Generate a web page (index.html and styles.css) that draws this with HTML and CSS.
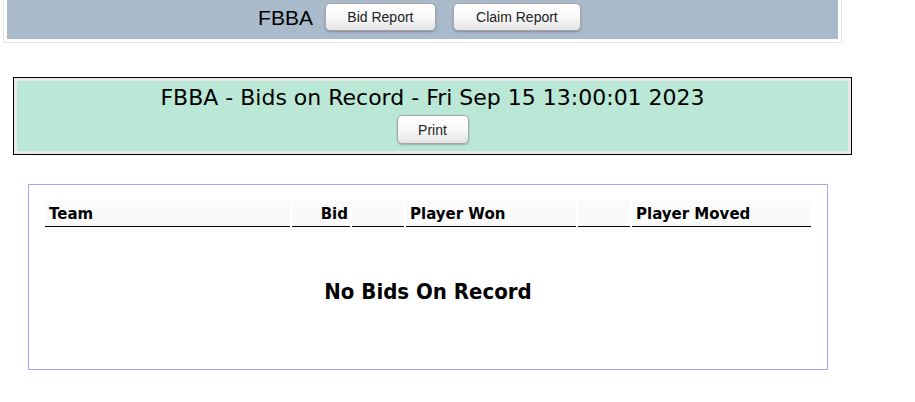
FILE: index.html
```html
<!DOCTYPE html>
<html>
<head>
<meta charset="utf-8">
<link rel="stylesheet" href="styles.css">
</head>
<body>
<div class="topwrap">
  <div class="topbar">
    <span class="brand">FBBA</span>
    <button class="btn btn-bid">Bid Report</button>
    <button class="btn btn-claim">Claim Report</button>
  </div>
</div>

<div class="titlewrap">
  <div class="titlebox">
    <div class="title">FBBA - Bids on Record - Fri Sep 15 13:00:01 2023</div>
    <button class="btn btn-print">Print</button>
  </div>
</div>

<div class="panel">
  <div class="thead">
    <div class="th">Team</div>
    <div class="th right">Bid</div>
    <div class="th"></div>
    <div class="th">Player Won</div>
    <div class="th"></div>
    <div class="th">Player Moved</div>
  </div>
  <div class="empty">No Bids On Record</div>
</div>
</body>
</html>
```
FILE: styles.css
```css
html, body {
  margin: 0;
  padding: 0;
  background: #ffffff;
}
body {
  font-family: "DejaVu Sans", Verdana, sans-serif;
  color: #000;
}
.topwrap {
  width: 831px;
  margin-left: 3px;
  border: 1px solid #e6e6e6;
  border-top: none;
  padding: 0 3px 3px 3px;
}
.topbar {
  background: #a9bacb;
  height: 39px;
  display: flex;
  align-items: center;
  justify-content: center;
  padding-right: 6px;
  box-sizing: border-box;
}
.brand {
  font-family: "Liberation Sans", Arial, sans-serif;
  font-size: 21px;
  margin-right: 12px;
  margin-top: -4px;
}
.btn {
  font-family: "Liberation Sans", Arial, sans-serif;
  font-size: 14px;
  color: #222;
  background: linear-gradient(#ffffff 0%, #f7f7f7 55%, #e4e4e4 100%);
  border: 1px solid #a6a6a6;
  border-radius: 5px;
  box-shadow: 0 1px 2px rgba(0,0,0,0.25);
  height: 28px;
  padding: 0;
  cursor: pointer;
}
.btn-bid {
  width: 111px;
  margin-top: -5px;
}
.btn-claim {
  width: 128px;
  margin-left: 17px;
  margin-top: -5px;
}
.titlewrap {
  margin: 34px 0 0 13px;
  width: 831px;
  border: 1px solid #000;
  background: #e8e8e8;
  padding: 3px;
  box-sizing: content-box;
}
.titlebox {
  background: #bbe8d6;
  height: 70px;
  display: flex;
  flex-direction: column;
  align-items: center;
}
.title {
  font-size: 22px;
  line-height: 26px;
  margin-top: 4px;
}
.btn-print {
  width: 72px;
  height: 29px;
  margin-top: 4px;
}
.panel {
  margin: 29px 0 0 28px;
  border: 1px solid #a5a5ee;
  padding: 16px 0 0 16px;
  box-sizing: content-box;
  width: 782px;
  height: 168px;
}
.thead {
  display: grid;
  grid-template-columns: 245px 58px 52px 170px 52px 179px;
  column-gap: 2px;
  width: 766px;
}
.th {
  background: #fafafa;
  border-bottom: 1px solid #000;
  height: 26px;
  font-size: 15px;
  font-weight: bold;
  line-height: 26px;
  padding: 0 4px;
  box-sizing: border-box;
}
.right {
  text-align: right;
  padding-right: 2px;
}
.empty {
  width: 766px;
  text-align: center;
  font-family: "DejaVu Sans Condensed", "DejaVu Sans", sans-serif;
  font-weight: bold;
  font-size: 22px;
  margin-top: 52px;
}
```
